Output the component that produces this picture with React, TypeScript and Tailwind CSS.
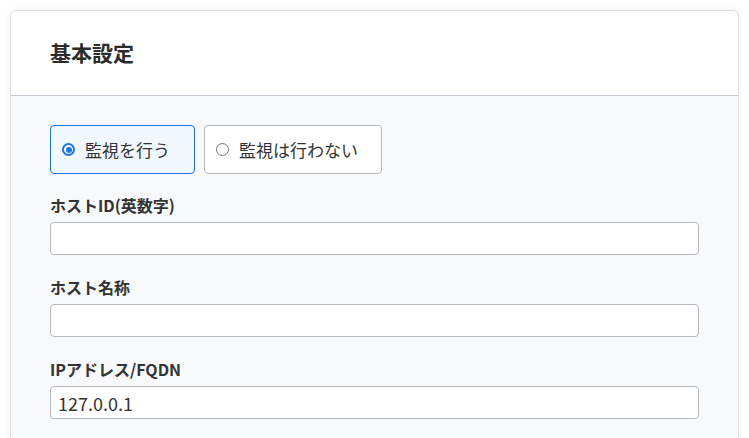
import React from "react";

const font = { fontFamily: '"Noto Sans CJK JP", "Noto Sans", sans-serif' };

function Field({ label, value }: { label: string; value?: string }) {
  return (
    <div className="flex flex-col">
      <label className="text-[16px] font-bold leading-[24px] text-[#333]">{label}</label>
      <input
        readOnly
        value={value ?? ""}
        className="mt-[5px] h-[33px] w-full rounded-[4px] border border-[#b5b8bd] bg-white px-[7px] text-[18px] text-[#333] outline-none"
      />
    </div>
  );
}

export default function App() {
  return (
    <div className="min-h-screen bg-white pl-[10px] pt-[10px]" style={font}>
      <div className="w-[729px] overflow-hidden rounded-t-[6px] border border-b-0 border-[#dde1e6] shadow-[0_0_6px_rgba(0,0,0,0.06)]">
        <div className="flex h-[85px] items-center border-b border-[#c3c9d1] bg-white px-[39px]">
          <h2 className="text-[21px] font-bold text-[#2b2b2b]">基本設定</h2>
        </div>
        <div className="bg-[#f7f9fb] px-[39px] pb-[24px] pt-[29px]">
          <div className="flex gap-[9px]">
            <label className="flex h-[49px] w-[145px] items-center gap-[10px] rounded-[4px] border border-[#1a73e8] bg-[#f1f9ff] pl-[11px] text-[17px] text-[#333]">
              <span className="flex h-[13px] w-[13px] items-center justify-center rounded-full border-2 border-[#1a73e8] bg-white">
                <span className="h-[6px] w-[6px] rounded-full bg-[#1a73e8]" />
              </span>
              監視を行う
            </label>
            <label className="flex h-[49px] w-[178px] items-center gap-[10px] rounded-[4px] border border-[#b5b8bd] bg-white pl-[11px] text-[17px] text-[#333]">
              <span className="h-[13px] w-[13px] rounded-full border border-[#777] bg-white" />
              監視は行わない
            </label>
          </div>
          <div className="mt-[19px] flex flex-col gap-[20px]">
            <Field label="ホストID(英数字)" />
            <Field label="ホスト名称" />
            <Field label="IPアドレス/FQDN" value="127.0.0.1" />
          </div>
        </div>
      </div>
    </div>
  );
}
